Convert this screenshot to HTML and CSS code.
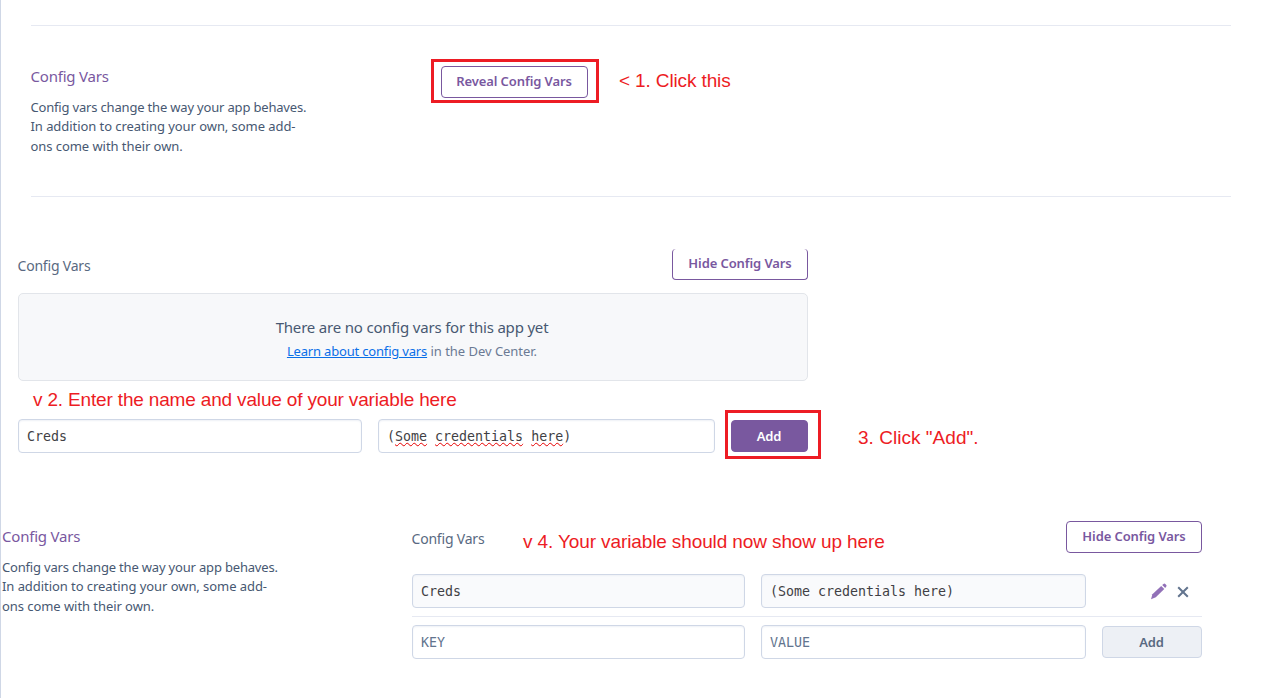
FILE: index.html
```html
<!DOCTYPE html>
<html lang="en">
<head>
<meta charset="utf-8">
<title>Config Vars</title>
<link rel="stylesheet" href="styles.css">
</head>
<body>
<main class="page">
  <section class="intro">
    <div class="about">
      <h2 class="about-title">Config Vars</h2>
      <p class="about-text"><span class="lead">Config vars change the way your app behaves.</span><br>In addition to creating your own, some add-<br>ons come with their own.</p>
    </div>
    <div class="mark mark-reveal"><button class="btn btn-reveal">Reveal Config Vars</button></div>
    <p class="note note-reveal">&lt; 1. Click this</p>
  </section>

  <section class="entry">
    <div class="entry-head">
      <h3 class="label">Config Vars</h3>
      <button class="btn btn-hide btn-cut">Hide Config Vars</button>
    </div>
    <div class="empty">
      <p class="empty-title">There are no config vars for this app yet</p>
      <p class="empty-text"><a class="link" href="#">Learn about config vars</a> in the Dev Center.</p>
    </div>
    <p class="note note-enter">v 2. Enter the name and value of your variable here</p>
    <div class="entry-row">
      <div class="field">Creds</div>
      <div class="field">(<span class="typo">Some</span> <span class="typo">credentials</span> <span class="typo">here</span>)</div>
      <div class="mark mark-add"><button class="btn btn-add">Add</button></div>
      <p class="note note-add">3. Click "Add".</p>
    </div>
  </section>

  <section class="result">
    <div class="about">
      <h2 class="about-title">Config Vars</h2>
      <p class="about-text"><span class="lead">Config vars change the way your app behaves.</span><br>In addition to creating your own, some add-<br>ons come with their own.</p>
    </div>
    <div class="vars">
      <div class="vars-head">
        <h3 class="label">Config Vars</h3>
        <p class="note note-show">v 4. Your variable should now show up here</p>
        <button class="btn btn-hide">Hide Config Vars</button>
      </div>
      <div class="vars-row vars-saved">
        <div class="field field-saved">Creds</div>
        <div class="field field-saved">(Some credentials here)</div>
        <div class="actions">
          <svg class="icon" width="18" height="18" viewBox="0 0 18 18"><path fill="#9271b8" d="M1 17.2 2.4 12.3 11.2 4 14.3 7 5.8 15.2Z"/><path fill="#9271b8" d="M12.2 3.1 13.5 1.9Q14.4 1.2 15.3 2L16.2 2.9Q17 3.8 16.3 4.6L15.2 6Z"/></svg>
          <svg class="icon-x" width="12" height="12" viewBox="0 0 12 12"><path fill="none" stroke="#62748e" stroke-width="2" d="M1.2 1.2 10.8 10.8M10.8 1.2 1.2 10.8"/></svg>
        </div>
      </div>
      <div class="vars-row vars-new">
        <div class="field field-hint">KEY</div>
        <div class="field field-hint">VALUE</div>
        <button class="btn btn-off">Add</button>
      </div>
    </div>
  </section>
</main>
</body>
</html>
```
FILE: styles.css
```css
* { box-sizing: border-box; }
body { margin: 0; background: #fff; color: #475872; font-family: "Noto Sans", sans-serif; font-size: 13px; }
h2, h3, p { margin: 0; font-weight: 400; white-space: nowrap; }
.page { width: 1266px; height: 698px; overflow: hidden; border-left: 1px solid #cfd7e6; }

.intro { display: flex; align-items: flex-start; width: 1200px; height: 172px; margin: 25px 0 0 30px; border-top: 1px solid #e6e9f2; border-bottom: 1px solid #e6e9f2; }
.intro .about { width: 400px; padding-top: 39px; }
.intro .about-title, .intro .about-text { margin-left: -0.5px; }
.about-title { font-size: 15px; line-height: 22px; color: #79589f; letter-spacing: -0.2px; }
.about-text { margin-top: 10.6px; line-height: 19.5px; letter-spacing: -0.06px; }
.lead { letter-spacing: -0.18px; }

.btn { height: 32px; padding: 0 1px 2px 0; border: 1px solid #79589f; border-radius: 4px; background: #fff; color: #79589f; font: 600 13px/28px "Noto Sans", sans-serif; letter-spacing: -0.1px; white-space: nowrap; }
.btn-reveal { display: block; width: 147px; }
.btn-hide { width: 136px; padding-right: 0; }
.mark { border: 3px solid #ed1c24; }
.mark-reveal { width: 168px; height: 44px; margin-top: 33px; padding: 4px 8px 2px 7px; }
.note { font: 19px/22px "Liberation Sans", Arial, sans-serif; color: #ed1c24; }
.note-reveal { margin: 44px 0 0 20px; letter-spacing: -0.13px; }

.entry { width: 1000px; margin: 52px 0 0 17px; }
.entry-head { display: flex; justify-content: space-between; width: 790px; height: 31px; }
.label { margin-left: -0.5px; font-size: 14px; line-height: 20px; letter-spacing: -0.2px; color: #596981; }
.entry .label { margin-top: 7px; }
.btn-cut { height: 31px; border-top: 0; }
.empty { width: 790px; height: 88px; margin-top: 13px; padding: 22px 2px 0 0; border: 1px solid #e2e5ea; border-radius: 5px; background: #f7f8fa; text-align: center; }
.empty-title { font-size: 15px; line-height: 22px; letter-spacing: -0.19px; }
.empty-text { margin-top: 3px; line-height: 20px; letter-spacing: -0.03px; color: #6b7a94; }
.link { color: #0a6fe8; letter-spacing: -0.18px; }
.note-enter { margin: 8px 0 0 15px; letter-spacing: -0.165px; }
.entry-row { display: grid; grid-template-columns: 344px 337px 96px auto; align-items: start; height: 49px; margin-top: -1px; }
.entry-row .field { margin-top: 9px; }
.entry-row .field + .field { margin-left: 16px; margin-right: -16px; }
.field { height: 34px; padding: 1px 8px 0; border: 1px solid #cfd7e6; border-radius: 4px; background: #fff; box-shadow: inset 0 1px 2px #eef1f6; color: #3f3f44; font: 13.3px/32px "DejaVu Sans Mono", monospace; white-space: nowrap; }
.typo { text-decoration: underline wavy #e60000 1.3px; text-underline-offset: 1px; text-decoration-skip-ink: none; }
.mark-add { width: 96px; height: 49px; margin-left: 26px; padding: 7px 10px 4px 3px; }
.btn-add { display: block; width: 77px; padding-bottom: 1px; background: #79589f; color: #fff; }
.note-add { margin: 17px 0 0 63px; letter-spacing: 0.03px; }

.result { display: flex; margin-top: 62px; }
.result .about { width: 410px; padding: 4px 0 0 1px; }
.vars { width: 790px; margin-left: 1px; }
.vars-head { display: flex; height: 32px; }
.result .label { flex: none; margin-top: 8px; width: 111.5px; }
.note-show { flex: none; margin-top: 10px; width: 543px; letter-spacing: -0.115px; }
.vars-head .btn { flex: none; }
.vars-row { display: grid; grid-template-columns: 333px 325px 100px; gap: 16px; }
.vars-saved { height: 43px; margin-top: 21px; border-bottom: 1px solid #e6e9f2; }
.field-saved { background: #f9fafc; }
.field-hint { color: #62748e; }
.actions { display: flex; align-items: center; gap: 9px; height: 34px; padding-left: 48px; }
.icon-x { margin-top: 2px; }
.vars-new { margin-top: 8px; align-items: center; }
.btn-off { padding-bottom: 0; border-color: #cfd7e6; background: #edf0f5; color: #596981; }
```
